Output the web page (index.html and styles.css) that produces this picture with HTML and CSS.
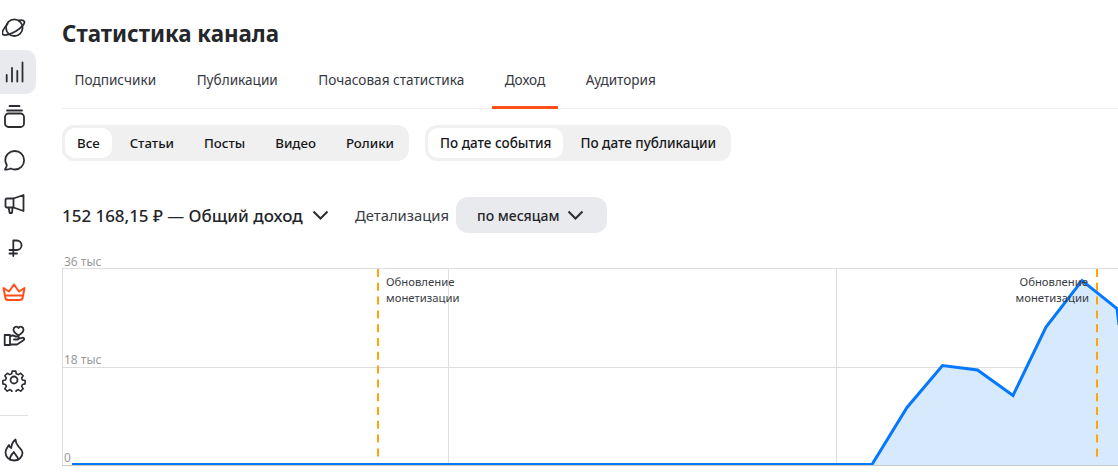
FILE: index.html
```html
<!DOCTYPE html>
<html lang="ru">
<head>
<meta charset="utf-8">
<title>Статистика канала</title>
<link rel="stylesheet" href="styles.css">
</head>
<body>
<div class="page">
  <nav class="sidebar">
    <a class="nav-item"><svg class="icon" viewBox="0 0 24 24"><circle cx="12.300" cy="11.700" r="8.300"/><path d="M5.500 8C2 12-.5 16.500.8 18.300c1.500 1.700 7.500.2 13-3s9.500-7.800 8.500-9.800c-.7-1.300-3-1.500-5.300-1"/></svg></a>
    <a class="nav-item active"><svg class="icon" viewBox="0 0 24 24"><path d="M4.700 21.500V15M10 21.500V8M15.300 21.500V11M20.500 21.500V2.500"/></svg></a>
    <a class="nav-item"><svg class="icon" viewBox="0 0 24 24"><rect x="3" y="9.500" width="19" height="13.500" rx="3.500"/><path d="M5 6.500h15M7.500 2h10"/></svg></a>
    <a class="nav-item"><svg class="icon" viewBox="0 0 24 24"><path d="M3 21.500c1-1.500 1.800-3 1.800-4.500C3.800 15.500 3.300 14 3.300 12.300 3.300 7 7.600 3 12.800 3s9.300 4 9.300 9.200-4.100 9.300-9.300 9.300c-1.500 0-2.800-.3-4-1-1.500.8-3.500 1.200-5.800 1z"/></svg></a>
    <a class="nav-item"><svg class="icon" viewBox="0 0 24 24"><path d="M21.500 3v16l-10-3.500H5A1.500 1.500 0 0 1 3.500 14V8A1.500 1.500 0 0 1 5 6.500h6.500zM11.500 6.500v9M6.500 15.500l1.200 5.500h2.300l.5-5"/></svg></a>
    <a class="nav-item"><svg class="icon" viewBox="0 0 24 24"><path d="M11.300 20V4.500h3.500a4.700 4.700 0 0 1 0 9.500H7.500M7.500 17.500H15"/></svg></a>
    <a class="nav-item"><svg class="icon crown" viewBox="0 0 24 24"><path d="M1.500 8l5.500 3.500L12 4.500l5 7L22.500 8l-1.800 9.500a3 3 0 0 1-3 2.500H6.300a3 3 0 0 1-3-2.500zM3.500 15.500h17"/></svg></a>
    <a class="nav-item"><svg class="icon" viewBox="0 0 24 24"><path d="M2.700 11h5.300v10H2.700zM8 12.500c2-1.500 3.500-1.500 5.500 0h2a1.500 1.500 0 0 1 0 3h-3.500M15.500 15l4.500-1.200c2-.5 3 1.500 1.500 2.500L15 20.500H8"/><path d="M16.500 11.500c-3.500-2.300-5-3.800-5-5.800 0-3 3.500-4 5-1.700 1.500-2.300 5-1.300 5 1.700 0 2-1.500 3.500-5 5.800z"/></svg></a>
    <a class="nav-item"><svg class="icon" viewBox="0 0 24 24"><circle cx="12" cy="12" r="3.500"/><path d="M10 2h4l.6 3 2.200 1 2.700-1.600 2.800 2.900-1.700 2.500.9 2.200 3 .6v3.800l-3 .6-.9 2.200 1.700 2.500-2.800 2.900-2.700-1.700-2.200 1-.6 3h-4l-.6-3-2.200-1-2.700 1.700-2.800-2.900 1.700-2.500-.9-2.200-3-.6v-3.800l3-.6.9-2.200-1.700-2.500 2.800-2.900L7.200 6l2.200-1z" transform="translate(1.300 1.300) scale(.89)"/></svg></a>
    <div class="nav-sep"></div>
    <a class="nav-item"><svg class="icon" viewBox="0 0 24 24"><path d="M12 22.500c-5 0-8.500-3.500-8.500-8 0-3.500 2-5.500 3.500-7.500.5 1.500 1 2.500 2.200 3C9.500 6.500 11 3.500 13.500 1.500c0 3.500 1.500 5 3.500 7.500 1.800 2 3.500 3.200 3.500 5.800 0 4.200-3.500 7.700-8.500 7.700z"/><path d="M8 21.500c-.5-3 1.500-4.500 3.800-7.500 1 2.500 4.200 3.800 4.200 7.500"/></svg></a>
  </nav>
  <main class="content">
    <h1 class="title">Статистика канала</h1>
    <div class="tabs">
      <a class="tab">Подписчики</a>
      <a class="tab">Публикации</a>
      <a class="tab">Почасовая статистика</a>
      <a class="tab current">Доход</a>
      <a class="tab">Аудитория</a>
    </div>
    <div class="filters">
      <div class="segment types">
        <span class="seg-item on">Все</span>
        <span class="seg-item">Статьи</span>
        <span class="seg-item">Посты</span>
        <span class="seg-item">Видео</span>
        <span class="seg-item">Ролики</span>
      </div>
      <div class="segment dates">
        <span class="seg-item on">По дате события</span>
        <span class="seg-item">По дате публикации</span>
      </div>
    </div>
    <div class="summary">
      <div class="total">152 168,15 ₽ — Общий доход<svg class="chev" viewBox="0 0 16 10"><path d="M1 1.500l7 7 7-7"/></svg></div>
      <span class="detail-label">Детализация</span>
      <button class="detail-btn">по месяцам<svg class="chev" viewBox="0 0 16 10"><path d="M1 1.500l7 7 7-7"/></svg></button>
    </div>
    <svg class="chart" viewBox="62 250 1056 222">
      <path class="grid" d="M62.500 268.500H1118M62.500 367.500H1118M62.500 268V465M448.500 268V465M836.500 268V465"/>
      <path class="area" d="M872 464L907 407.500 942.500 365.500 977.500 370 1013 395.500 1046 327 1082 280.500 1117 308.500 1118 320V465H872z"/>
      <path class="dash" d="M378 269V459M1097 269V459"/>
      <path class="curve" d="M72 464.500H872L907 407.500 942.500 365.500 977.500 370 1013 395.500 1046 327 1082 280.500 1117 308.500 1119 325"/>
      <path class="axis" d="M62 465.500H1118"/>
      <text class="tick" x="64" y="266">36 тыс</text>
      <text class="tick" x="64" y="364">18 тыс</text>
      <text class="tick" x="64" y="462">0</text>
      <text class="note" x="386" y="286">Обновление</text>
      <text class="note" x="386" y="302">монетизации</text>
      <text class="note" x="1088" y="286" text-anchor="end">Обновление</text>
      <text class="note" x="1089" y="302" text-anchor="end">монетизации</text>
    </svg>
  </main>
</div>
</body>
</html>
```

FILE: styles.css
```css
* { box-sizing: border-box; }
html, body { margin: 0; height: 100%; overflow: hidden; background: #fff; }
body { font-family: "Noto Sans", "Open Sans", sans-serif; color: #202022; }
.page { display: flex; height: 472px; }

.sidebar { width: 62px; flex: none; display: flex; flex-direction: column; padding-top: 6px; }
.nav-item { width: 36px; height: 44px; display: flex; align-items: center; justify-content: center; border-radius: 0 10px 10px 0; }
.nav-item.active { background: #e9eaee; }
.icon { width: 24px; height: 24px; fill: none; stroke: #2b2d33; stroke-width: 1.8; stroke-linecap: round; stroke-linejoin: round; margin-left: -8px; }
.crown { stroke: #ff5019; stroke-width: 2; }
.nav-sep { width: 28px; height: 1px; background: #e0e0e0; margin: 13px 0 12px; }

.content { flex: 1; min-width: 0; }
.title { margin: 18px 0 0; font-size: 22.3px; line-height: 32px; font-weight: 700; color: #26272b; }
.tabs { display: flex; gap: 15.500px; margin-top: 9px; height: 50px; border-bottom: 1px solid #eeeeef; }
.tab { padding: 0 12.500px; height: 50px; line-height: 42px; font-size: 13.6px; color: #36383f; }
.tab.current { border-bottom: 3px solid #ff5019; }

.filters { display: flex; gap: 16px; margin-top: 16px; }
.segment { display: flex; height: 36px; padding: 3px; border-radius: 12px; background: #f0f0f0; }
.seg-item { padding: 0 12px; margin-right: 6px; line-height: 30px; font-weight: 500; color: #16171a; border-radius: 10px; }
.seg-item:last-child { margin-right: 0; }
.seg-item.on { background: #fff; }
.types .seg-item { font-size: 13.25px; }
.dates .seg-item { font-size: 13.5px; margin-right: 5px; }
.dates .seg-item:last-child { margin-right: 0; }

.summary { display: flex; align-items: center; margin-top: 36px; height: 36px; }
.total { font-size: 16.95px; font-weight: 500; color: #24252a; display: flex; align-items: center; width: 293px; }
.chev { width: 17px; height: 10px; fill: none; stroke: #2b2d33; stroke-width: 2; margin-left: 9px; }
.detail-label { font-size: 14.800px; color: #3b3d45; margin-right: 7px; }
.detail-btn { display: flex; align-items: center; height: 36px; padding: 0 23px 0 21px; border: 0; border-radius: 12px; background: #e9eaee; font: 500 14px "Noto Sans", sans-serif; color: #24252a; }
.detail-btn .chev { margin-left: 8px; }

.chart { display: block; width: 1056px; height: 222px; margin-top: 17px; }
.grid { stroke: #dedede; stroke-width: 1; fill: none; }
.axis { stroke: #c8c8c8; stroke-width: 1; fill: none; }
.area { fill: #d7e9fd; }
.dash { stroke: #ffa50a; stroke-width: 2; stroke-dasharray: 8 5.800; fill: none; }
.curve { stroke: #0678fb; stroke-width: 3; fill: none; }
.tick { font-size: 12px; fill: #9a9a9a; }
.note { font-size: 11.300px; fill: #3a3c44; }
```
